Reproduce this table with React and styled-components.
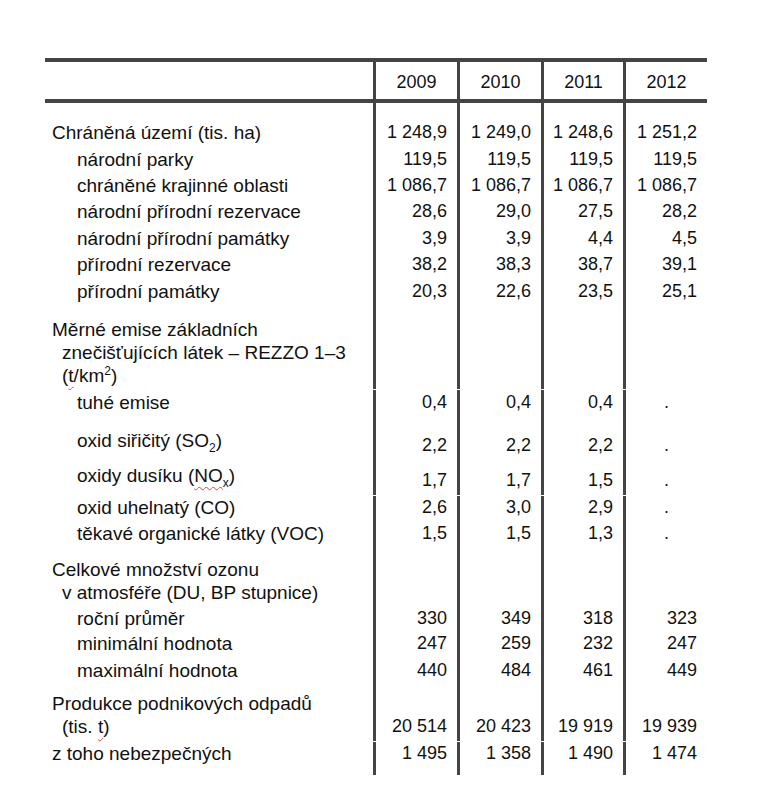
import React from "react";
import styled, { createGlobalStyle } from "styled-components";

const Global = createGlobalStyle`
  html, body { margin: 0; padding: 0; background: #fff; }
  body { font-family: "Liberation Sans", Arial, sans-serif; color: #111; }
`;

const LINE = "#444";

const Page = styled.div`
  padding: 58px 0 10px 45px;
`;

const Table = styled.div`
  width: 662px;
`;

const Head = styled.div`
  display: grid;
  grid-template-columns: 328px 84px 84px 82px 84px;
  height: 37px;
  border-top: 4px solid ${LINE};
  border-bottom: 4px solid ${LINE};
`;

const HeadCell = styled.div`
  border-left: ${(p) => (p.$first ? "none" : `3px solid ${LINE}`)};
  font-size: 18px;
  line-height: 33px;
  padding-top: 4px;
  text-align: center;
`;

const Segment = styled.div`
  margin-top: ${(p) => p.$gap}px;
`;

const Row = styled.div`
  display: grid;
  grid-template-columns: 328px 84px 84px 82px 84px;
  height: ${(p) => p.$h}px;
`;

const Label = styled.div`
  font-size: 19px;
  line-height: 23px;
  padding-top: ${(p) => p.$pt}px;
  padding-left: ${(p) => (p.$level === 1 ? 32 : 17)}px;
  text-indent: ${(p) => (p.$level === 1 ? 0 : -10)}px;
  white-space: nowrap;
`;

const Value = styled.div`
  border-left: 3px solid ${LINE};
  font-size: 18px;
  line-height: 23px;
  padding-top: ${(p) => p.$pt}px;
  padding-right: ${(p) => (p.$dot ? 0 : 10)}px;
  text-align: ${(p) => (p.$dot ? "center" : "right")};
  white-space: nowrap;
`;

const Sub = styled.span`
  font-size: 12px;
  line-height: 0;
  vertical-align: -5px;
`;

const Sup = styled.span`
  font-size: 12px;
  line-height: 0;
  vertical-align: 7px;
`;

const Spell = styled.span`
  text-decoration: underline wavy #e04040;
  text-decoration-thickness: 1px;
  text-underline-offset: 4px;
`;

const segments = [
  {
    gap: 0,
    rows: [
      { label: "Chráněná území (tis. ha)", level: 0, values: ["1 248,9", "1 249,0", "1 248,6", "1 251,2"], h: 42.6, pt: 18 },
      { label: "národní parky", level: 1, values: ["119,5", "119,5", "119,5", "119,5"], h: 26.6, pt: 2 },
      { label: "chráněné krajinné oblasti", level: 1, values: ["1 086,7", "1 086,7", "1 086,7", "1 086,7"], h: 26.6, pt: 2 },
      { label: "národní přírodní rezervace", level: 1, values: ["28,6", "29,0", "27,5", "28,2"], h: 26.6, pt: 1 },
      { label: "národní přírodní památky", level: 1, values: ["3,9", "3,9", "4,4", "4,5"], h: 26.6, pt: 2 },
      { label: "přírodní rezervace", level: 1, values: ["38,2", "38,3", "38,7", "39,1"], h: 26.6, pt: 1 },
      { label: "přírodní památky", level: 1, values: ["20,3", "22,6", "23,5", "25,1"], h: 26.6, pt: 1 },
      {
        label: (
          <>
            Měrné emise základních
            <br />
            znečišťujících látek – REZZO 1–3
            <br />
            (<Spell>t</Spell>/km<Sup>2</Sup>)
          </>
        ),
        level: 0,
        values: ["", "", "", ""],
        h: 83.8,
        pt: 13.3,
      },
    ],
  },
  {
    gap: 1,
    rows: [
      { label: "tuhé emise", level: 1, values: ["0,4", "0,4", "0,4", "."], h: 26, pt: 1.5 },
      {
        label: (
          <>
            oxid siřičitý (SO<Sub>2</Sub>)
          </>
        ),
        level: 1,
        values: ["2,2", "2,2", "2,2", "."],
        h: 36,
        pt: 13,
        vpt: 18,
      },
      {
        label: (
          <>
            oxidy dusíku (<Spell>NO<Sub>x</Sub></Spell>)
          </>
        ),
        level: 1,
        values: ["1,7", "1,7", "1,5", "."],
        h: 43,
        pt: 12.5,
        vpt: 16.7,
      },
    ],
  },
  {
    gap: 1,
    rows: [
      { label: "oxid uhelnatý (CO)", level: 1, values: ["2,6", "3,0", "2,9", "."], h: 26.5, pt: 0 },
      { label: "těkavé organické látky (VOC)", level: 1, values: ["1,5", "1,5", "1,3", "."], h: 26.5, pt: 0 },
      {
        label: (
          <>
            Celkové množství ozonu
            <br />v atmosféře (DU, BP stupnice)
          </>
        ),
        level: 0,
        values: ["", "", "", ""],
        h: 56,
        pt: 9,
      },
      { label: "roční průměr", level: 1, values: ["330", "349", "318", "323"], h: 26, pt: 2 },
      { label: "minimální hodnota", level: 1, values: ["247", "259", "232", "247"], h: 26, pt: 1.5 },
      { label: "maximální hodnota", level: 1, values: ["440", "484", "461", "449"], h: 27, pt: 1.7 },
      {
        label: (
          <>
            Produkce podnikových odpadů
            <br />
            (tis. <Spell>t</Spell>)
          </>
        ),
        level: 0,
        values: ["20 514", "20 423", "19 919", "19 939"],
        h: 57,
        pt: 8.3,
        vpt: 31.3,
      },
    ],
  },
  {
    gap: 1,
    rows: [
      { label: "z toho nebezpečných", level: 0, values: ["1 495", "1 358", "1 490", "1 474"], h: 33, pt: 0 },
    ],
  },
];

export default function App() {
  return (
    <Page>
      <Global />
      <Table>
        <Head>
          <HeadCell $first />
          {["2009", "2010", "2011", "2012"].map((y) => (
            <HeadCell key={y}>{y}</HeadCell>
          ))}
        </Head>
        {segments.map((seg, si) => (
          <Segment key={si} $gap={seg.gap}>
            {seg.rows.map((r, ri) => (
              <Row key={ri} $h={r.h}>
                <Label $level={r.level} $pt={r.pt}>
                  {r.label}
                </Label>
                {r.values.map((v, vi) => (
                  <Value key={vi} $pt={r.vpt ?? r.pt} $dot={v === "."}>
                    {v}
                  </Value>
                ))}
              </Row>
            ))}
          </Segment>
        ))}
      </Table>
    </Page>
  );
}
